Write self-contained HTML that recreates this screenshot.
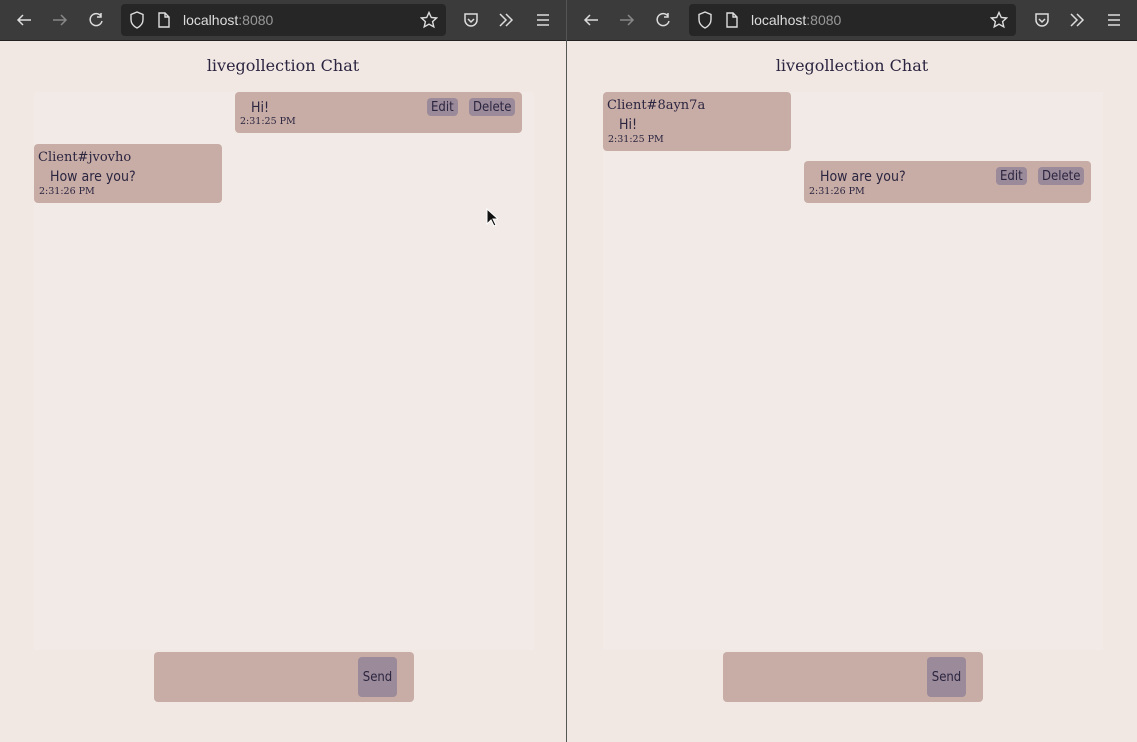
<!DOCTYPE html>
<html><head><meta charset="utf-8"><style>
*{margin:0;padding:0;box-sizing:border-box}
body{width:1137px;height:742px;overflow:hidden;background:#f1e8e4;position:relative;font-family:"DejaVu Serif","Liberation Serif",serif;color:#2b2540}
.win{position:absolute;top:0;height:742px;overflow:hidden}
.tb{position:absolute;left:0;top:0;right:0;height:41px;background:#3b3b3b;border-bottom:1px solid #222}
.url{position:absolute;top:4px;height:32px;background:#262626;border-radius:4px;width:325px}
.url span{position:absolute;left:62px;top:8px;font:14px "Liberation Sans",sans-serif;color:#ddd}
.url span i{font-style:normal;color:#999}
.ic{position:absolute;top:11px}
.title{position:absolute;top:56px;font-size:16px;width:566px;text-align:center}
.list{position:absolute;top:92px;width:500px;height:558px;background:#f2eae6}
.b{position:absolute;background:#c8ada6;border-radius:4px}
.nm{position:absolute;left:4px;top:6px;font-size:13px}
.tx{position:absolute;left:16px;font:14px "DejaVu Sans Condensed","Liberation Sans",sans-serif}
.tm{position:absolute;left:5px;font-size:9.5px}
.btn{position:absolute;top:6px;height:18px;background:#9b8a99;border-radius:4px;font:13px "DejaVu Sans Condensed","Liberation Sans",sans-serif;line-height:19px;padding:0 4px}
.inp{position:absolute;top:652px;width:260px;height:50px;background:#c8ada6;border-radius:4px}
.send{position:absolute;left:204px;top:5px;width:39px;height:40px;background:#9b8a99;border-radius:4px;font:13px "DejaVu Sans Condensed","Liberation Sans",sans-serif;line-height:42px;text-align:center}
</style></head><body>
<div class="win" style="left:0;width:566px">
<div class="tb">
<svg class="ic" style="left:15px" width="18" height="18" viewBox="0 0 18 18" fill="none" stroke="#ddd" stroke-width="1.5"><path d="M16 9H3M8 4L3 9l5 5"/></svg>
<svg class="ic" style="left:51px" width="18" height="18" viewBox="0 0 18 18" fill="none" stroke="#888" stroke-width="1.5"><path d="M2 9h13M10 4l5 5-5 5"/></svg>
<svg class="ic" style="left:87px" width="18" height="18" viewBox="0 0 18 18" fill="none" stroke="#ddd" stroke-width="1.5"><path d="M14 5A6 6 0 1 0 15 10M14 2v4h-4"/></svg>
<div class="url" style="left:121px">
<svg class="ic" style="left:8px;top:7px" width="16" height="18" viewBox="0 0 16 18" fill="none" stroke="#ddd" stroke-width="1.4"><path d="M8 1L2 3.5v5C2 13 5 15.5 8 17c3-1.5 6-4 6-8.5v-5z"/></svg>
<svg class="ic" style="left:36px;top:8px" width="14" height="16" viewBox="0 0 14 16" fill="none" stroke="#ddd" stroke-width="1.4"><path d="M2 1h6l4 4v10H2zM8 1v4h4"/></svg>
<span>localhost<i>:8080</i></span>
<svg class="ic" style="left:299px;top:7px" width="18" height="18" viewBox="0 0 18 18" fill="none" stroke="#ddd" stroke-width="1.4"><path d="M9 1.5l2.3 5 5.3.5-4 3.6 1.2 5.3L9 13.2l-4.8 2.7 1.2-5.3-4-3.6 5.3-.5z"/></svg>
</div>
<svg class="ic" style="left:462px" width="18" height="18" viewBox="0 0 18 18" fill="none" stroke="#ddd" stroke-width="1.5"><path d="M3 3h12v6a6 6 0 0 1-12 0zM6 8l3 3 3-3"/></svg>
<svg class="ic" style="left:497px" width="18" height="18" viewBox="0 0 18 18" fill="none" stroke="#ddd" stroke-width="1.5"><path d="M3 3l6 6-6 6M9 3l6 6-6 6"/></svg>
<svg class="ic" style="left:534px" width="18" height="18" viewBox="0 0 18 18" fill="none" stroke="#ddd" stroke-width="1.5"><path d="M3 4h12M3 9h12M3 14h12"/></svg>
</div>
<div class="title" style="left:0">livegollection Chat</div>
<div class="list" style="left:34px"></div>
<div class="b" style="left:235px;top:92px;width:287px;height:41px">
<div class="tx" style="top:8px">Hi!</div>
<div class="btn" style="left:192px">Edit</div><div class="btn" style="left:234px">Delete</div>
<div class="tm" style="top:24px">2:31:25 PM</div></div>
<div class="b" style="left:34px;top:144px;width:188px;height:59px">
<div class="nm">Client#jvovho</div><div class="tx" style="top:25px">How are you?</div>
<div class="tm" style="top:42px">2:31:26 PM</div></div>
<div class="inp" style="left:154px"><div class="send">Send</div></div>
<svg style="position:absolute;left:486px;top:208px" width="12" height="20" viewBox="0 0 12 20"><path d="M1 1v15l4-4 3 6 2-1-3-6h5z" fill="#111" stroke="#fff" stroke-width="1"/></svg>
</div>
<div style="position:absolute;left:566px;top:0;width:1px;height:742px;background:#555"></div>
<div class="win" style="left:567px;width:570px">
<div class="tb">
<svg class="ic" style="left:15px" width="18" height="18" viewBox="0 0 18 18" fill="none" stroke="#ddd" stroke-width="1.5"><path d="M16 9H3M8 4L3 9l5 5"/></svg>
<svg class="ic" style="left:51px" width="18" height="18" viewBox="0 0 18 18" fill="none" stroke="#888" stroke-width="1.5"><path d="M2 9h13M10 4l5 5-5 5"/></svg>
<svg class="ic" style="left:87px" width="18" height="18" viewBox="0 0 18 18" fill="none" stroke="#ddd" stroke-width="1.5"><path d="M14 5A6 6 0 1 0 15 10M14 2v4h-4"/></svg>
<div class="url" style="left:122px;width:327px">
<svg class="ic" style="left:8px;top:7px" width="16" height="18" viewBox="0 0 16 18" fill="none" stroke="#ddd" stroke-width="1.4"><path d="M8 1L2 3.5v5C2 13 5 15.5 8 17c3-1.5 6-4 6-8.5v-5z"/></svg>
<svg class="ic" style="left:36px;top:8px" width="14" height="16" viewBox="0 0 14 16" fill="none" stroke="#ddd" stroke-width="1.4"><path d="M2 1h6l4 4v10H2zM8 1v4h4"/></svg>
<span>localhost<i>:8080</i></span>
<svg class="ic" style="left:301px;top:7px" width="18" height="18" viewBox="0 0 18 18" fill="none" stroke="#ddd" stroke-width="1.4"><path d="M9 1.5l2.3 5 5.3.5-4 3.6 1.2 5.3L9 13.2l-4.8 2.7 1.2-5.3-4-3.6 5.3-.5z"/></svg>
</div>
<svg class="ic" style="left:466px" width="18" height="18" viewBox="0 0 18 18" fill="none" stroke="#ddd" stroke-width="1.5"><path d="M3 3h12v6a6 6 0 0 1-12 0zM6 8l3 3 3-3"/></svg>
<svg class="ic" style="left:501px" width="18" height="18" viewBox="0 0 18 18" fill="none" stroke="#ddd" stroke-width="1.5"><path d="M3 3l6 6-6 6M9 3l6 6-6 6"/></svg>
<svg class="ic" style="left:538px" width="18" height="18" viewBox="0 0 18 18" fill="none" stroke="#ddd" stroke-width="1.5"><path d="M3 4h12M3 9h12M3 14h12"/></svg>
</div>
<div class="title" style="left:0;width:570px">livegollection Chat</div>
<div class="list" style="left:36px"></div>
<div class="b" style="left:36px;top:92px;width:188px;height:59px">
<div class="nm">Client#8ayn7a</div><div class="tx" style="top:25px">Hi!</div>
<div class="tm" style="top:42px">2:31:25 PM</div></div>
<div class="b" style="left:237px;top:161px;width:287px;height:42px">
<div class="tx" style="top:8px">How are you?</div>
<div class="btn" style="left:192px">Edit</div><div class="btn" style="left:234px">Delete</div>
<div class="tm" style="top:25px">2:31:26 PM</div></div>
<div class="inp" style="left:156px"><div class="send">Send</div></div>
</div>
</body></html>
